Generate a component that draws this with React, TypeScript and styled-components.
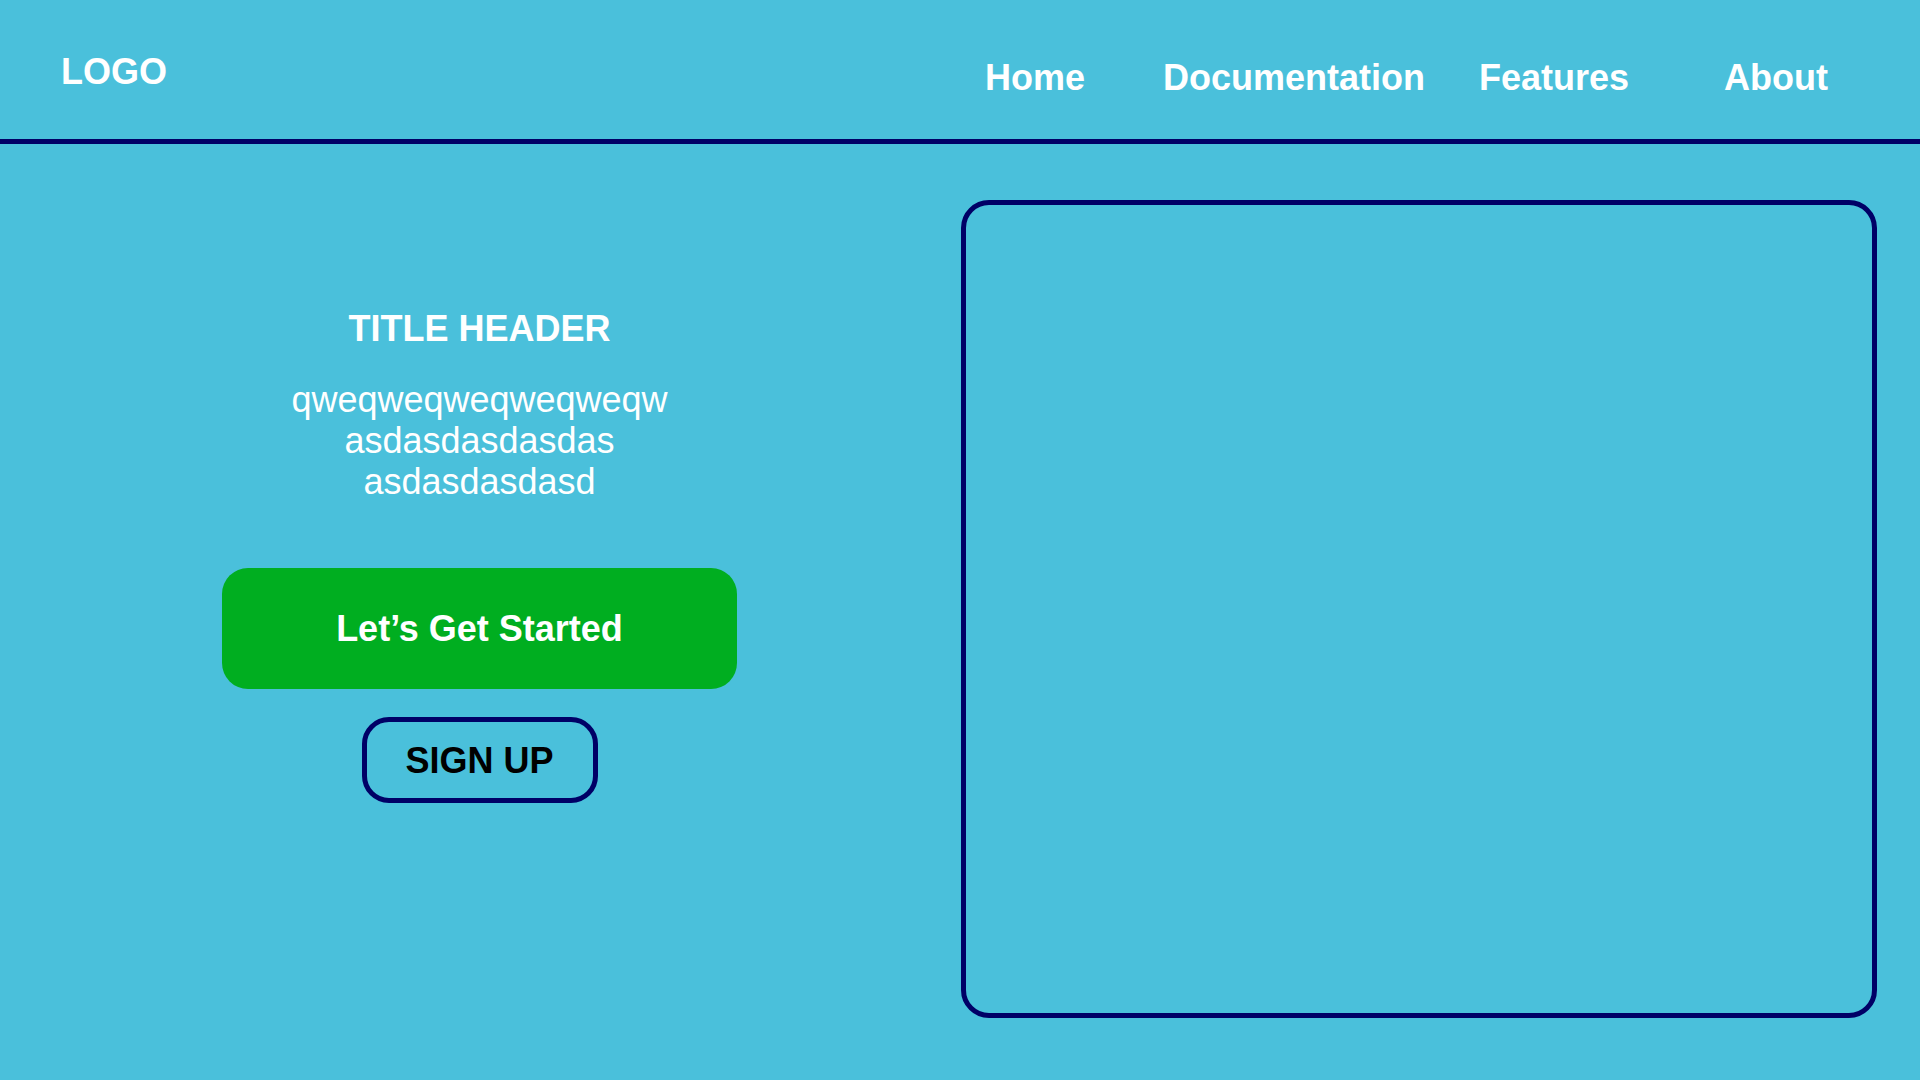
import React from "react";
import styled, { createGlobalStyle } from "styled-components";

const GlobalStyle = createGlobalStyle`
  html, body {
    margin: 0;
    padding: 0;
    background: #4ac0db;
  }
  body {
    font-family: "Liberation Sans", Arial, sans-serif;
  }
  * { box-sizing: border-box; }
`;

const Page = styled.div`
  width: 1920px;
  height: 1080px;
  background: #4ac0db;
  display: flex;
  flex-direction: column;
  overflow: hidden;
`;

const Header = styled.header`
  height: 144px;
  border-bottom: 5px solid #000066;
  display: flex;
  align-items: flex-start;
  padding: 51px 0 0 61px;
`;

const Logo = styled.div`
  color: #ffffff;
  font-size: 36px;
  font-weight: 700;
  line-height: 41px;
  width: 924px;
`;

const Nav = styled.nav`
  display: flex;
  margin-top: 6px;
`;

const NavLink = styled.a<{ $w: number }>`
  display: block;
  width: ${(p) => p.$w}px;
  color: #ffffff;
  font-size: 36px;
  font-weight: 700;
  line-height: 41px;
  text-decoration: none;
  white-space: nowrap;
`;

const Main = styled.main`
  flex: 1;
  display: grid;
  grid-template-columns: 959px 916px;
  column-gap: 2px;
  padding: 56px 43px 62px 0;
`;

const Hero = styled.section`
  display: flex;
  flex-direction: column;
  align-items: center;
  padding-top: 108px;
`;

const Title = styled.h1`
  margin: 0;
  color: #ffffff;
  font-size: 36px;
  font-weight: 700;
  line-height: 41px;
`;

const Blurb = styled.p`
  margin: 30px 0 0;
  color: #ffffff;
  font-size: 36px;
  font-weight: 400;
  line-height: 41px;
  text-align: center;
`;

const PrimaryButton = styled.button`
  margin-top: 66px;
  width: 515px;
  height: 121px;
  border: none;
  border-radius: 26px;
  background: #00ae20;
  color: #ffffff;
  font-family: "Liberation Sans", Arial, sans-serif;
  font-size: 36px;
  font-weight: 700;
  cursor: pointer;
`;

const OutlineButton = styled.button`
  margin-top: 28px;
  width: 236px;
  height: 86px;
  padding: 2px 0 0;
  border: 5px solid #000066;
  border-radius: 27px;
  background: transparent;
  color: #000000;
  font-family: "Liberation Sans", Arial, sans-serif;
  font-size: 36px;
  font-weight: 700;
  cursor: pointer;
`;

const Showcase = styled.div`
  border: 5px solid #000066;
  border-radius: 28px;
  height: 818px;
`;

export default function App() {
  return (
    <>
      <GlobalStyle />
      <Page>
        <Header>
          <Logo>LOGO</Logo>
          <Nav>
            <NavLink $w={178}>Home</NavLink>
            <NavLink $w={316}>Documentation</NavLink>
            <NavLink $w={245}>Features</NavLink>
            <NavLink $w={150}>About</NavLink>
          </Nav>
        </Header>
        <Main>
          <Hero>
            <Title>TITLE HEADER</Title>
            <Blurb>
              qweqweqweqweqweqw
              <br />
              asdasdasdasdas
              <br />
              asdasdasdasd
            </Blurb>
            <PrimaryButton>Let’s Get Started</PrimaryButton>
            <OutlineButton>SIGN UP</OutlineButton>
          </Hero>
          <Showcase />
        </Main>
      </Page>
    </>
  );
}
